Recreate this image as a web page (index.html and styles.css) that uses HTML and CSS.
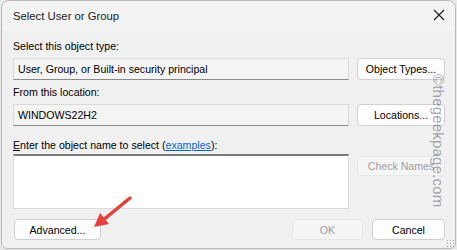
FILE: index.html
```html
<!DOCTYPE html>
<html lang="en">

<head>
    <meta charset="UTF-8">
    <title>Select User or Group</title>
    <link rel="stylesheet" href="styles.css">
</head>

<body>
    <div class="window">
        <div class="titlebar">
            <span class="title">Select User or Group</span>
            <svg class="close" width="12" height="12" viewBox="0 0 12 12">
                <path d="M1 1 L11 11 M11 1 L1 11" stroke="#1a1a1a" stroke-width="1.1" fill="none" />
            </svg>
        </div>

        <div class="content">
            <div class="label first">Select this object type:</div>
            <div class="row">
                <div class="field">User, Group, or Built-in security principal</div>
                <button class="btn side">Object Types...</button>
            </div>

            <div class="label">From this location:</div>
            <div class="row">
                <div class="field">WINDOWS22H2</div>
                <button class="btn side">Locations...</button>
            </div>

            <div class="label third"><u>E</u>nter the object name to select (<a href="#">examples</a>):</div>
            <div class="row tall">
                <div class="textbox"></div>
                <button class="btn side disabled">Check Names</button>
            </div>

            <div class="footer">
                <button class="btn advanced">Advanced...</button>
                <div class="actions">
                    <button class="btn ok disabled">OK</button>
                    <button class="btn cancel">Cancel</button>
                </div>
            </div>
        </div>

        <div class="grip"></div>
    </div>

    <div class="watermark">©thegeekpage.com</div>

    <svg class="arrow" width="60" height="50" viewBox="0 0 60 50">
        <path d="M38 4 L10 27" stroke="#e5403c" stroke-width="3.5" stroke-linecap="round" fill="none" />
        <path d="M2 33 L8 19 L17 30 Z" fill="#e5403c" />
    </svg>
</body>

</html>
```

FILE: styles.css
```css
* {
    box-sizing: border-box;
}

body {
    margin: 0;
    width: 457px;
    height: 250px;
    background: #e9e9e9;
    font-family: "Liberation Sans", Arial, sans-serif;
    font-size: 10.6px;
    color: #000;
    overflow: hidden;
    position: relative;
}

.window {
    width: 455px;
    height: 249px;
    margin-left: 1px;
    background: #f0f0f0;
    border: 1px solid #b9b9b9;
    border-radius: 8px 8px 6px 6px;
    position: relative;
}

.titlebar {
    height: 29px;
    display: flex;
    align-items: center;
    justify-content: space-between;
    padding: 0 10px 0 11px;
    background: #f3f3f3;
    border-radius: 8px 8px 0 0;
}

.title {
    font-size: 11.3px;
    color: #1a1a1a;
}

.close {
    margin-top: -2px;
}

.content {
    padding: 9px 10px 0 11px;
}

.label {
    height: 15px;
    line-height: 15px;
    margin-top: 5px;
    margin-bottom: 4px;
}

.label.first {
    margin-top: 0;
}

.label.third {
    margin-top: 12px;
    margin-bottom: 1px;
}

.label a {
    color: #0066cc;
}

.row {
    display: flex;
    gap: 8px;
    height: 22px;
}

.row.tall {
    height: 55px;
    align-items: flex-start;
}

.field {
    flex: 1;
    height: 22px;
    line-height: 20px;
    padding-left: 4px;
    background: #f4f4f4;
    border: 1px solid #dadada;
    border-bottom: 1px solid #8a8a8a;
}

.textbox {
    flex: 1;
    height: 55px;
    background: #fff;
    border: 1px solid #dadada;
    border-top: 2px solid #7a7a7a;
}

.btn {
    font-family: inherit;
    font-size: 10.6px;
    color: #000;
    background: #fdfdfd;
    border: 1px solid #d0d0d0;
    border-radius: 4px;
    height: 22px;
    padding: 0;
    cursor: default;
}

.btn.side {
    width: 88px;
}

.row.tall .btn {
    margin-top: 2px;
    height: 20px;
}

.btn.disabled {
    background: #f5f5f5;
    border-color: #e8e8e8;
    color: #9d9d9d;
}

.footer {
    display: flex;
    justify-content: space-between;
    margin-top: 10px;
}

.btn.advanced {
    width: 87px;
    height: 21px;
    margin-left: 1px;
}

.actions {
    display: flex;
    gap: 9px;
}

.btn.ok {
    width: 71px;
    height: 21px;
}

.btn.cancel {
    width: 73px;
    height: 21px;
}

.grip {
    position: absolute;
    right: 1px;
    bottom: 1px;
    width: 8px;
    height: 8px;
    background: radial-gradient(circle, #9a9a9a 0.8px, transparent 1px) 0 0 / 3px 3px;
}

.watermark {
    position: absolute;
    left: 447px;
    top: 74px;
    transform-origin: 0 0;
    transform: rotate(90deg);
    font-size: 15px;
    color: rgba(90, 90, 110, 0.55);
    white-space: nowrap;
    letter-spacing: 0.2px;
}

.arrow {
    position: absolute;
    left: 92px;
    top: 194px;
}
```
